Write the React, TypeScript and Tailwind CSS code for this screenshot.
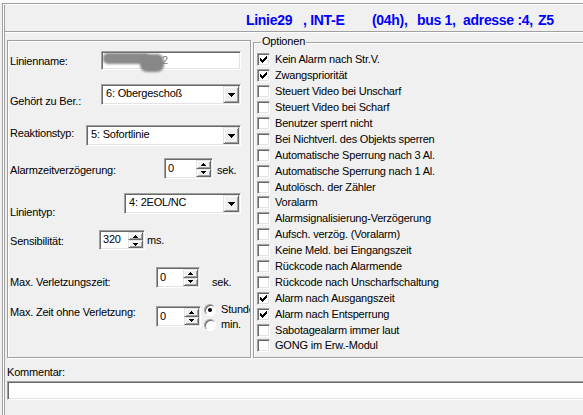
import type { ReactNode } from "react";

const sunken =
  "border border-t-[#a0a0a0] border-l-[#a0a0a0] border-r-white border-b-white bg-white shadow-[inset_1px_1px_0_#696969,inset_-1px_-1px_0_#e3e3e3]";
const raised =
  "border border-t-[#e3e3e3] border-l-[#e3e3e3] border-r-[#696969] border-b-[#696969] bg-[#f0f0f0] shadow-[inset_1px_1px_0_#ffffff,inset_-1px_-1px_0_#a0a0a0]";

const options: [string, boolean][] = [
  ["Kein Alarm nach Str.V.", true],
  ["Zwangspriorität", true],
  ["Steuert Video bei Unscharf", false],
  ["Steuert Video bei Scharf", false],
  ["Benutzer sperrt nicht", false],
  ["Bei Nichtverl. des Objekts sperren", false],
  ["Automatische Sperrung nach 3 Al.", false],
  ["Automatische Sperrung nach 1 Al.", false],
  ["Autolösch. der Zähler", false],
  ["Voralarm", false],
  ["Alarmsignalisierung-Verzögerung", false],
  ["Aufsch. verzög. (Voralarm)", false],
  ["Keine Meld. bei Eingangszeit", false],
  ["Rückcode nach Alarmende", false],
  ["Rückcode nach Unscharfschaltung", false],
  ["Alarm nach Ausgangszeit", true],
  ["Alarm nach Entsperrung", true],
  ["Sabotagealarm immer laut", false],
  ["GONG im Erw.-Modul", false],
];

function ArrowUp() {
  return (
    <svg width="5" height="3" shapeRendering="crispEdges">
      <rect x="2" y="0" width="1" height="1" />
      <rect x="1" y="1" width="3" height="1" />
      <rect x="0" y="2" width="5" height="1" />
    </svg>
  );
}

function ArrowDown() {
  return (
    <svg width="5" height="3" shapeRendering="crispEdges">
      <rect x="0" y="0" width="5" height="1" />
      <rect x="1" y="1" width="3" height="1" />
      <rect x="2" y="2" width="1" height="1" />
    </svg>
  );
}

function DropArrow() {
  return (
    <svg width="7" height="4" shapeRendering="crispEdges">
      <rect x="0" y="0" width="7" height="1" />
      <rect x="1" y="1" width="5" height="1" />
      <rect x="2" y="2" width="3" height="1" />
      <rect x="3" y="3" width="1" height="1" />
    </svg>
  );
}

function CheckMark() {
  return (
    <svg width="7" height="7" shapeRendering="crispEdges">
      <rect x="0" y="2" width="1" height="3" />
      <rect x="1" y="3" width="1" height="3" />
      <rect x="2" y="4" width="1" height="3" />
      <rect x="3" y="3" width="1" height="3" />
      <rect x="4" y="2" width="1" height="3" />
      <rect x="5" y="1" width="1" height="3" />
      <rect x="6" y="0" width="1" height="3" />
    </svg>
  );
}

function Select({ value, className }: { value: string; className: string }) {
  return (
    <div className={`${sunken} flex shrink-0 p-[1px] ${className}`}>
      <span className="flex flex-1 items-center pb-[2px] pl-[3px]">{value}</span>
      <div className={`${raised} flex w-[16px] items-center justify-center`}>
        <DropArrow />
      </div>
    </div>
  );
}

function Spin({ value, className }: { value: string; className: string }) {
  return (
    <div className={`${sunken} flex shrink-0 p-[1px] ${className}`}>
      <span className="flex flex-1 items-center pb-[1px] pl-[2px]">{value}</span>
      <div className="flex w-[15px] flex-col">
        <div className={`${raised} flex flex-1 items-center justify-center`}>
          <ArrowUp />
        </div>
        <div className={`${raised} flex flex-1 items-center justify-center`}>
          <ArrowDown />
        </div>
      </div>
    </div>
  );
}

function Radio({ checked, label }: { checked: boolean; label: string }) {
  return (
    <div className="flex h-[15px] items-center">
      <div className="flex h-[12px] w-[12px] shrink-0 items-center justify-center rounded-full border border-t-[#a0a0a0] border-l-[#a0a0a0] border-r-white border-b-white bg-white shadow-[inset_1px_1px_0_#696969]">
        {checked && <div className="h-[4px] w-[4px] rounded-full bg-black" />}
      </div>
      <span className="ml-[5px] whitespace-nowrap">{label}</span>
    </div>
  );
}

function Row({ h, children }: { h: string; children: ReactNode }) {
  return <div className={`flex shrink-0 items-start ${h}`}>{children}</div>;
}

function LeftPanel() {
  return (
    <div className="mt-[7px] h-[318px] w-[244px] shrink-0 overflow-hidden border border-[#a0a0a0] pl-[2px] pt-[10px] shadow-[inset_1px_1px_0_#ffffff,1px_1px_0_#ffffff]">
      <Row h="h-[33px]">
        <div className="mt-[4px] w-[91px] shrink-0">Linienname:</div>
        <div className={`${sunken} relative h-[19px] w-[140px] shrink-0`}>
          <div className="absolute left-[1px] top-[1px] h-[11px] w-[46px] rounded-[5px] bg-[#8a8a8a] blur-[1px]" />
          <div className="absolute left-[38px] top-[2px] h-[18px] w-[24px] rounded-[7px] bg-[#878787] blur-[1px]" />
          <span className="absolute left-[60px] top-[2px] text-[#7d7d7d]">2</span>
        </div>
      </Row>
      <Row h="h-[41px]">
        <div className="mt-[11px] w-[91px] shrink-0">Gehört zu Ber.:</div>
        <Select value="6: Obergeschoß" className="h-[21px] w-[140px]" />
      </Row>
      <Row h="h-[33px]">
        <div className="mt-[2px] w-[76px] shrink-0">Reaktionstyp:</div>
        <Select value="5: Sofortlinie" className="h-[21px] w-[155px]" />
      </Row>
      <Row h="h-[35px]">
        <div className="mt-[6px] w-[154px] shrink-0">Alarmzeitverzögerung:</div>
        <Spin value="0" className="h-[21px] w-[49px]" />
        <div className="ml-[4px] mt-[6px]">sek.</div>
      </Row>
      <Row h="h-[37px]">
        <div className="mt-[13px] w-[114px] shrink-0">Linientyp:</div>
        <Select value="4: 2EOL/NC" className="h-[21px] w-[117px]" />
      </Row>
      <Row h="h-[37px]">
        <div className="mt-[5px] w-[89px] shrink-0">Sensibilität:</div>
        <Spin value="320" className="h-[20px] w-[46px]" />
        <div className="ml-[2px] mt-[4px]">ms.</div>
      </Row>
      <Row h="h-[35px]">
        <div className="mt-[9px] w-[146px] shrink-0">Max. Verletzungszeit:</div>
        <Spin value="0" className="h-[21px] w-[44px]" />
        <div className="ml-[12px] mt-[9px]">sek.</div>
      </Row>
      <Row h="h-[40px]">
        <div className="mt-[4px] w-[146px] shrink-0">Max. Zeit ohne Verletzung:</div>
        <Spin value="0" className="mt-[4px] h-[21px] w-[45px]" />
        <div className="ml-[3px] flex flex-col">
          <Radio checked label="Stunden" />
          <Radio checked={false} label="min." />
        </div>
      </Row>
    </div>
  );
}

function OptionsBox() {
  return (
    <div className="relative ml-[2px] mt-[9px] h-[316px] w-[340px] shrink-0 border border-[#a0a0a0] pl-[3px] pt-[9px] shadow-[inset_1px_1px_0_#ffffff,1px_1px_0_#ffffff]">
      <span className="absolute left-[7px] top-[-8px] bg-[#f0f0f0] px-[1px]">Optionen</span>
      {options.map(([label, checked]) => (
        <div key={label} className="flex h-[15.9px] items-center">
          <div className={`${sunken} flex h-[13px] w-[13px] shrink-0 items-center justify-center`}>
            {checked && <CheckMark />}
          </div>
          <span className="ml-[5px] whitespace-nowrap">{label}</span>
        </div>
      ))}
    </div>
  );
}

const header: [string, string][] = [
  ["Linie29", "w-[57px]"],
  [", INT-E", "w-[69px]"],
  ["(04h),", "w-[45px]"],
  ["bus 1,", "w-[46px]"],
  ["adresse :4,", "w-[75px]"],
  ["Z5", "w-[30px]"],
];

export default function App() {
  return (
    <div className="h-[415px] w-[583px] overflow-hidden bg-[#f0f0f0] font-['Liberation_Sans',Arial,sans-serif] text-[11px] leading-[13px] tracking-[-0.2px] text-black">
      <div className="h-[3px] bg-[#fbfbfb]" />
      <div className="ml-[2px] h-[412px] border-l border-t border-[#a0a0a0]">
        <div className="h-full border-l border-t border-white">
          <div className="flex h-full flex-col border-l border-[#a0a0a0]">
            <div className="flex h-[26px] shrink-0 pl-[241px] pt-[7px] text-[14px] font-bold leading-[16px] tracking-[-0.3px] text-[#0000ff]">
              {header.map(([t, w]) => (
                <span key={t} className={`${w} shrink-0 whitespace-nowrap`}>
                  {t}
                </span>
              ))}
            </div>
            <div className="h-[2px] shrink-0 border-t border-[#a0a0a0] bg-white" />
            <div className="flex shrink-0 pl-[2px]">
              <LeftPanel />
              <OptionsBox />
            </div>
            <div className="mt-[8px] pl-[2px]">Kommentar:</div>
            <div className={`${sunken} ml-[2px] mt-[2px] h-[19px] w-[600px] shrink-0`} />
          </div>
        </div>
      </div>
    </div>
  );
}
